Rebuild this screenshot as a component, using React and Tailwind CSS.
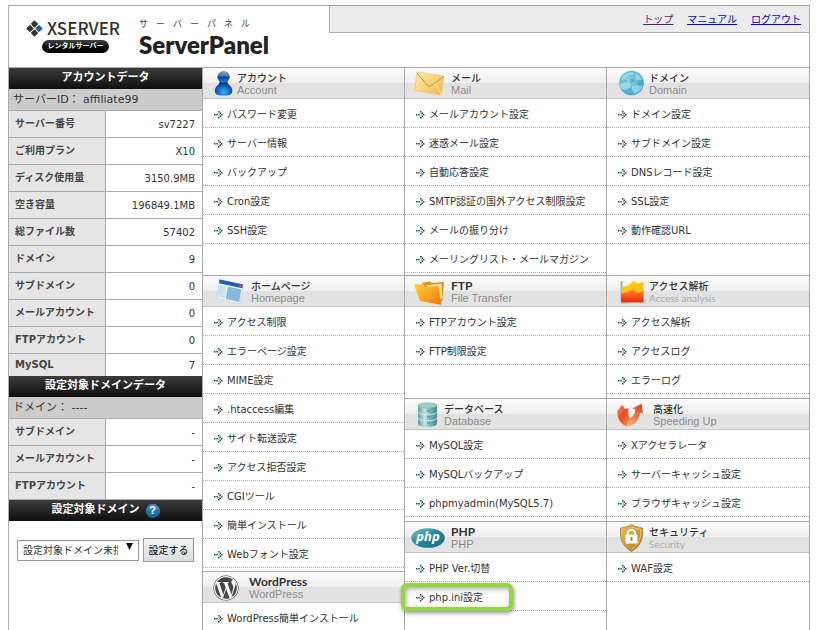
import clsx from "clsx";
import { FaWordpress } from "react-icons/fa";

const ACCOUNT_ROWS = [
  ["サーバー番号", "sv7227"],
  ["ご利用プラン", "X10"],
  ["ディスク使用量", "3150.9MB"],
  ["空き容量", "196849.1MB"],
  ["総ファイル数", "57402"],
  ["ドメイン", "9"],
  ["サブドメイン", "0"],
  ["メールアカウント", "0"],
  ["FTPアカウント", "0"],
  ["MySQL", "7"],
];

const DOMAIN_ROWS = [
  ["サブドメイン", "-"],
  ["メールアカウント", "-"],
  ["FTPアカウント", "-"],
];

function AccountIcon() {
  return (
    <svg width="34" height="30" viewBox="0 0 34 30" aria-hidden="true">
      <defs>
        <radialGradient id="acBody" cx="50%" cy="75%" r="65%">
          <stop offset="0" stopColor="#35b4f0" />
          <stop offset="0.6" stopColor="#1261c0" />
          <stop offset="1" stopColor="#0a2f86" />
        </radialGradient>
        <linearGradient id="acHead" x1="0" y1="0" x2="0" y2="1">
          <stop offset="0" stopColor="#7d9ccb" />
          <stop offset="0.45" stopColor="#4674b8" />
          <stop offset="0.5" stopColor="#0c3d96" />
          <stop offset="1" stopColor="#1f86d8" />
        </linearGradient>
      </defs>
      <path d="M16.500 13h8c-.2 2 .4 2.800 2 4.300 2 1.800 3 3.500 2.800 6.700-.1 2.500-3.800 3.600-8.800 3.600s-8.500-1.100-8.600-3.600c-.1-3.200.8-4.900 2.700-6.700 1.700-1.500 2.200-2.300 1.900-4.300z" fill="url(#acBody)" />
      <ellipse cx="20.500" cy="8.800" rx="6.200" ry="5.800" fill="url(#acHead)" />
    </svg>
  );
}

function MailIcon() {
  return (
    <svg width="46" height="30" viewBox="0 0 46 30" aria-hidden="true">
      <defs>
        <linearGradient id="mailBg" x1="0" y1="0" x2="1" y2="1">
          <stop offset="0" stopColor="#fde9b0" />
          <stop offset="0.5" stopColor="#f9d27e" />
          <stop offset="1" stopColor="#efb44e" />
        </linearGradient>
      </defs>
      <path d="M12 4l27 4-2.500 19L9.500 22.500z" fill="url(#mailBg)" stroke="#f0c470" strokeWidth="0.700" />
      <path d="M12 5l10.500 12.500c1 1 2.500 1.200 3.800.2L38.800 8.500" fill="none" stroke="#b98a45" strokeWidth="0.900" />
      <path d="M10 22l9.500-7M36.300 26.300L30 15" fill="none" stroke="#fbe3ad" strokeWidth="0.800" />
    </svg>
  );
}

function DomainIcon() {
  return (
    <svg width="42" height="30" viewBox="0 0 42 30" aria-hidden="true">
      <defs>
        <radialGradient id="globe" cx="40%" cy="40%" r="65%">
          <stop offset="0" stopColor="#8fd3e6" />
          <stop offset="0.7" stopColor="#56b4d3" />
          <stop offset="1" stopColor="#3d9fc2" />
        </radialGradient>
      </defs>
      <circle cx="24.500" cy="15" r="12.300" fill="url(#globe)" />
      <path d="M15 9c3-4 8-5.500 12-4.500l-1 2-5 1-2 3-4 2zM29 5l4 3 2 4-5 0-2-3zM13 16l6-2 5 2-1 4-5 2-4-1zM25 18l7-1 4 1-3 5-5 3-3-4z" fill="#bfe7f1" opacity="0.550" />
      <path d="M22 12l4-2 2 3-4 2zM30 16l4-1-1 4zM17 12l3 0-1 3zM21 20l4 0-1 4z" fill="#3392b4" opacity="0.450" />
    </svg>
  );
}

function HomepageIcon() {
  return (
    <svg width="48" height="30" viewBox="0 0 48 30" aria-hidden="true">
      <path d="M16.500 3.500l23.500 5-3 19-23.500-5.500z" fill="#f3f7fb" stroke="#c3cfdb" strokeWidth="0.600" />
      <path d="M16.500 3.500l23.500 5-.6 3.700-23.400-5z" fill="#1f5fae" />
      <circle cx="37.300" cy="10" r="1.300" fill="#e5483a" />
      <path d="M16 8.500l7.500 1.700-2 12.300-7.300-1.700z" fill="#c9e2f5" />
      <path d="M24.800 10.500l13.500 3-2 12.500-13.500-3z" fill="#86b8e0" />
    </svg>
  );
}

function FtpIcon() {
  return (
    <svg width="46" height="30" viewBox="0 0 46 30" aria-hidden="true">
      <defs>
        <linearGradient id="folder" x1="0" y1="0" x2="1" y2="1">
          <stop offset="0" stopColor="#fdd23c" />
          <stop offset="0.500" stopColor="#f9a81e" />
          <stop offset="1" stopColor="#ec6f10" />
        </linearGradient>
      </defs>
      <path d="M17 7l8-1.500 2 1.500 12-1-1.500 18-3 4z" fill="#e98b17" />
      <path d="M21 9.500l15.500-2 .8 14-2.800 3z" fill="#fde2a0" />
      <path d="M9 8.500l8-.5 3.500 3 11.500-.8c1 0 1.800.3 2 1.300L36 28.800 15 25z" fill="url(#folder)" />
    </svg>
  );
}

function AnalysisIcon() {
  return (
    <svg width="42" height="30" viewBox="0 0 42 30" aria-hidden="true">
      <defs>
        <linearGradient id="anRed" x1="0" y1="0" x2="0" y2="1">
          <stop offset="0" stopColor="#ff8a2b" />
          <stop offset="1" stopColor="#e8260c" />
        </linearGradient>
      </defs>
      <path d="M14.500 5v19" stroke="#b0b0b0" strokeWidth="2" />
      <path d="M15.500 11l6-1.500 5-4.500 4 2.500 6-1.500v14h-21z" fill="#fbc21b" />
      <path d="M15.500 11l6-1.500 5-4.500 4 2.500 6-1.500" fill="none" stroke="#ffe45c" strokeWidth="1.200" />
      <path d="M14 17.500l7-1.500 5-2.500 5 3.500 5.500-2.500V26l-22.500.5z" fill="url(#anRed)" />
      <path d="M14 27l23-.5 1.500-2" fill="none" stroke="#9b8d88" strokeWidth="0.800" />
    </svg>
  );
}

function DatabaseIcon() {
  return (
    <svg width="39" height="30" viewBox="0 0 39 30" aria-hidden="true">
      <defs>
        <linearGradient id="dbSide" x1="0" y1="0" x2="1" y2="0">
          <stop offset="0" stopColor="#5ba0a3" />
          <stop offset="0.350" stopColor="#c3e4e4" />
          <stop offset="0.650" stopColor="#75b5b8" />
          <stop offset="1" stopColor="#41858a" />
        </linearGradient>
      </defs>
      <path d="M13 6.500v18c0 2 4 3.300 9.500 3.300s9.500-1.300 9.500-3.300v-18z" fill="url(#dbSide)" />
      <path d="M13 12.500c0 2 4 3.300 9.500 3.300s9.500-1.300 9.500-3.300M13 18.500c0 2 4 3.300 9.500 3.300s9.500-1.300 9.500-3.300" fill="none" stroke="#dcecec" strokeWidth="0.900" />
      <path d="M22 12h3M22 18h3M22 24h3" stroke="#3d7f85" strokeWidth="1" />
      <ellipse cx="22.500" cy="6.500" rx="9.500" ry="2.600" fill="#9ccccd" stroke="#75b3b5" strokeWidth="0.700" />
    </svg>
  );
}

function SpeedIcon() {
  return (
    <svg width="46" height="30" viewBox="0 0 46 30" aria-hidden="true">
      <defs>
        <linearGradient id="spL" x1="0" y1="0" x2="0.800" y2="1">
          <stop offset="0" stopColor="#f5976d" />
          <stop offset="0.500" stopColor="#e2501f" />
          <stop offset="1" stopColor="#f08a4c" />
        </linearGradient>
        <linearGradient id="spR" x1="0.600" y1="0" x2="0.200" y2="1">
          <stop offset="0" stopColor="#e04a23" />
          <stop offset="0.600" stopColor="#f0834c" />
          <stop offset="1" stopColor="#f8b77a" />
        </linearGradient>
      </defs>
      <path d="M15 5.500l-4.700 6.500c-.5 6 2.700 12.500 9.200 15.700l4-7.200c-2-3-2.800-6.500-2-11.500L18 10z" fill="url(#spL)" />
      <path d="M19 27.700c1-3 2.500-5.500 3.500-8.200 3.500-1 5.500-4.500 5.700-9.500l-3-.5 9.500-4.700 1.300 10.200-3-1.500C32.500 20 28 27.500 19 27.700z" fill="url(#spR)" />
    </svg>
  );
}

function PhpIcon() {
  return (
    <svg width="46" height="30" viewBox="0 0 46 30" aria-hidden="true">
      <defs>
        <linearGradient id="phpBg" x1="0" y1="0" x2="1" y2="1">
          <stop offset="0" stopColor="#79bcc5" />
          <stop offset="0.500" stopColor="#27889a" />
          <stop offset="1" stopColor="#126a7d" />
        </linearGradient>
      </defs>
      <ellipse cx="23" cy="16" rx="16.800" ry="9.800" fill="url(#phpBg)" />
      <text x="23" y="19" textAnchor="middle" className="fill-white font-['Open_Sans',sans-serif] text-[13px] font-bold italic">
        php
      </text>
    </svg>
  );
}

function WordPressIcon() {
  return (
    <svg width="46" height="30" viewBox="0 0 46 30" aria-hidden="true">
      <circle cx="23" cy="16" r="12.500" fill="#f4f4f4" />
      <FaWordpress x="10" y="3" size={26} color="#464646" />
    </svg>
  );
}

function SecurityIcon() {
  return (
    <svg width="42" height="30" viewBox="0 0 42 30" aria-hidden="true">
      <defs>
        <linearGradient id="shield" x1="0" y1="0" x2="1" y2="1">
          <stop offset="0" stopColor="#e5c26c" />
          <stop offset="0.500" stopColor="#cf9f3b" />
          <stop offset="1" stopColor="#9c6f1d" />
        </linearGradient>
      </defs>
      <path d="M24.500 2.500c3 2 7 3 11 3.500 1 10-1.500 18-11 23.500-9.500-5.500-12-13.500-11-23.500 4-.5 8-1.500 11-3.500z" fill="url(#shield)" stroke="#a47a2a" strokeWidth="0.800" />
      <path d="M24.500 4.500c3 1.800 6 2.600 9.300 3 .5 8.500-1.800 15-9.300 19.800" fill="none" stroke="#ecd491" strokeWidth="0.900" />
      <path d="M20.800 14v-2.500a3.700 3.700 0 0 1 7.400 0V14" fill="none" stroke="#fff" strokeWidth="1.800" />
      <rect x="18.500" y="12.500" width="12" height="9" rx="1" fill="#fff" />
      <path d="M24.500 15v4" stroke="#b98a2c" strokeWidth="2" />
    </svg>
  );
}

const ACCOUNT = {
  title: "アカウント",
  sub: "Account",
  icon: AccountIcon,
  links: ["パスワード変更", "サーバー情報", "バックアップ", "Cron設定", "SSH設定"],
};
const HOMEPAGE = {
  title: "ホームページ",
  sub: "Homepage",
  icon: HomepageIcon,
  links: [
    "アクセス制限",
    "エラーページ設定",
    "MIME設定",
    ".htaccess編集",
    "サイト転送設定",
    "アクセス拒否設定",
    "CGIツール",
    "簡単インストール",
    "Webフォント設定",
  ],
};
const WORDPRESS = {
  title: "WordPress",
  latin: true,
  sub: "WordPress",
  icon: WordPressIcon,
  links: ["WordPress簡単インストール"],
};
const MAIL = {
  title: "メール",
  sub: "Mail",
  icon: MailIcon,
  links: [
    "メールアカウント設定",
    "迷惑メール設定",
    "自動応答設定",
    "SMTP認証の国外アクセス制限設定",
    "メールの振り分け",
    "メーリングリスト・メールマガジン",
  ],
};
const FTP = {
  title: "FTP",
  latin: true,
  sub: "File Transfer",
  icon: FtpIcon,
  links: ["FTPアカウント設定", "FTP制限設定"],
};
const DATABASE = {
  title: "データベース",
  sub: "Database",
  icon: DatabaseIcon,
  links: ["MySQL設定", "MySQLバックアップ", "phpmyadmin(MySQL5.7)"],
};
const PHP = {
  title: "PHP",
  latin: true,
  sub: "PHP",
  icon: PhpIcon,
  links: ["PHP Ver.切替", "php.ini設定"],
  highlight: "php.ini設定",
};
const DOMAIN = {
  title: "ドメイン",
  sub: "Domain",
  icon: DomainIcon,
  links: ["ドメイン設定", "サブドメイン設定", "DNSレコード設定", "SSL設定", "動作確認URL"],
};
const ANALYSIS = {
  title: "アクセス解析",
  sub: "Access analysis",
  narrow: true,
  icon: AnalysisIcon,
  links: ["アクセス解析", "アクセスログ", "エラーログ"],
};
const SPEED = {
  title: "高速化",
  sub: "Speeding Up",
  icon: SpeedIcon,
  links: ["Xアクセラレータ", "サーバーキャッシュ設定", "ブラウザキャッシュ設定"],
};
const SECURITY = {
  title: "セキュリティ",
  sub: "Security",
  narrow: true,
  icon: SecurityIcon,
  links: ["WAF設定"],
};

function Bullet() {
  return (
    <svg width="9" height="9" viewBox="0 0 9 9" className="shrink-0" aria-hidden="true">
      <g fill="#1d4a55">
        <rect x="0" y="4" width="1.500" height="1.500" />
        <rect x="2.300" y="4" width="1.500" height="1.500" />
        <rect x="4" y="1" width="1.500" height="1.500" />
        <rect x="5.500" y="2.500" width="1.500" height="1.500" />
        <rect x="7" y="4" width="1.500" height="1.500" />
        <rect x="5.500" y="5.500" width="1.500" height="1.500" />
        <rect x="4" y="7" width="1.500" height="1.500" />
      </g>
      <path d="M4.500 3.500l1.200 1.200-1.200 1.200" fill="none" stroke="#6f9aa3" strokeWidth="0.800" />
    </svg>
  );
}

function MenuSection({ section, className }) {
  const Icon = section.icon;
  return (
    <section className={className}>
      <div className="flex h-[31px] border-b border-[#c4c4c4] bg-[linear-gradient(#fcfcfc,#eeeeee_50%,#e1e1e1_50%,#e3e3e3)]">
        <Icon />
        <div className="pt-1">
          <h2
            className={clsx(
              "leading-3 text-[#333]",
              section.latin
                ? "font-['Lato',sans-serif] text-[12px] font-bold"
                : "font-['Noto_Sans_CJK_JP',sans-serif] text-[10px] font-medium"
            )}
          >
            {section.title}
          </h2>
          <p
            className={clsx(
              "leading-3",
              section.narrow
                ? "font-['Lato',sans-serif] text-[10px] text-[#aaa]"
                : "font-['Liberation_Sans',sans-serif] text-[11px] text-[#8c8c8c]"
            )}
          >
            {section.sub}
          </p>
        </div>
      </div>
      <ul>
        {section.links.map((label) => (
          <li key={label} className="relative border-b border-dotted border-[#aaa]">
            {label === section.highlight && (
              <span className="absolute top-px -left-1 h-7 w-28 rounded-md border-4 border-[#94d63e] shadow-[1px_2px_4px_rgba(0,0,0,0.45),inset_1px_2px_5px_rgba(0,0,0,0.35)]" />
            )}
            <a href="#" className="flex h-7 items-center gap-1 pt-0.5 pl-[11px] text-[10px] whitespace-nowrap">
              <Bullet />
              {label}
            </a>
          </li>
        ))}
      </ul>
    </section>
  );
}

function SideTitle({ children }) {
  return (
    <h2 className="flex h-[21px] items-center justify-center gap-1.5 bg-linear-to-b from-[#3c3c3c] to-[#101010] text-[11px] font-bold text-white">
      {children}
    </h2>
  );
}

function SideTable({ rows, compactLast }) {
  return (
    <table className="w-full table-fixed border-separate border-spacing-0 text-[10px]">
      <tbody>
        {rows.map(([label, value], i) => {
          const compact = compactLast && i === rows.length - 1;
          return (
            <tr key={label}>
              <th
                scope="row"
                className={clsx(
                  "w-[97px] border-r border-[#aaa] bg-[#e5e5e5] pl-1.5 text-left leading-4 font-bold whitespace-nowrap text-[#444]",
                  compact ? "h-[22px]" : "h-[27px] border-b"
                )}
              >
                {label}
              </th>
              <td className={clsx("border-[#aaa] pt-0.5 pr-[7px] text-right leading-4", !compact && "border-b")}>
                {value}
              </td>
            </tr>
          );
        })}
      </tbody>
    </table>
  );
}

function Header() {
  return (
    <header className="flex h-[62px] items-start border-b border-[#aaa]">
      <div className="flex w-[320px] shrink-0 pt-[11px] pl-[17px]">
        <div className="w-[113px]">
          <div className="flex h-[22px] items-center gap-1">
            <svg width="17" height="17" viewBox="0 0 17 17" aria-hidden="true">
              <g strokeLinejoin="round" strokeWidth="1">
                <path d="M8.500.8l3.200 3.200-3.200 3.200L5.300 4z" fill="#333" stroke="#333" />
                <path d="M4 5.300l3.200 3.200L4 11.700.8 8.500z" fill="#333" stroke="#333" />
                <path d="M13 5.300l3.200 3.200-3.200 3.200-3.200-3.200z" fill="#1c5cae" stroke="#1c5cae" />
                <path d="M8.500 9.800l3.200 3.200-3.200 3.200L5.300 13z" fill="#333" stroke="#333" />
              </g>
            </svg>
            <span className="font-['Noto_Sans_CJK_JP',sans-serif] text-[17px] leading-5 font-medium text-[#333]">
              XSERVER
            </span>
          </div>
          <div className="mt-px ml-4 flex h-[13px] w-[67px] items-center justify-center rounded-full bg-linear-to-b from-[#444] to-black text-[7px] leading-none font-bold whitespace-nowrap text-white">
            レンタルサーバー
          </div>
        </div>
        <div>
          <p className="flex gap-2 pt-px pb-[3px] font-['Noto_Sans_CJK_JP',sans-serif] text-[9px] leading-3 text-[#444]">
            {[..."サーバーパネル"].map((ch, i) => (
              <span key={i}>{ch}</span>
            ))}
          </p>
          <h1 className="font-['Lato',sans-serif] text-[24px] leading-6 font-extrabold text-[#222]">
            ServerPanel
          </h1>
        </div>
      </div>
      <nav className="flex h-[27px] flex-1 items-center justify-end gap-3.5 border-b border-l border-[#aaa] bg-[#ececec] pr-2 text-[10px] underline">
        <a href="#" className="text-[#551a8b]">トップ</a>
        <a href="#" className="text-[#0000ee]">マニュアル</a>
        <a href="#" className="text-[#0000ee]">ログアウト</a>
      </nav>
    </header>
  );
}

function Sidebar() {
  return (
    <aside className="w-[194px] shrink-0 border-r border-[#aaa]">
      <SideTitle>アカウントデータ</SideTitle>
      <p className="h-[22px] border-b border-[#aaa] bg-[#cbcbcb] pl-1 text-[11px] leading-[22px]">
        サーバーID： affiliate99
      </p>
      <SideTable rows={ACCOUNT_ROWS} compactLast />
      <SideTitle>設定対象ドメインデータ</SideTitle>
      <p className="h-[22px] border-b border-[#aaa] bg-[#cbcbcb] pl-1 text-[11px] leading-[22px]">
        ドメイン： ----
      </p>
      <SideTable rows={DOMAIN_ROWS} />
      <SideTitle>
        設定対象ドメイン
        <span className="flex size-3.5 items-center justify-center rounded-full bg-linear-to-b from-[#4a9bd0] to-[#10598f] font-['Liberation_Sans',sans-serif] text-[11px]">
          ?
        </span>
      </SideTitle>
      <form className="flex items-start gap-1 pt-4 pl-2" onSubmit={(e) => e.preventDefault()}>
        <div className="relative">
          <select
            aria-label="設定対象ドメイン"
            className="h-[21px] w-[122px] appearance-none border border-[#999] bg-white pr-5 pl-[5px] text-[10px]"
          >
            <option>設定対象ドメイン未指定</option>
          </select>
          <svg width="7" height="7" viewBox="0 0 7 7" className="pointer-events-none absolute top-1.5 right-1.5" aria-hidden="true">
            <path d="M0 0h7L3.500 7z" fill="#111" />
          </svg>
        </div>
        <button
          type="submit"
          className="mt-px h-6 w-[51px] border border-[#999] bg-linear-to-b from-[#f3f3f3] to-[#dcdcdc] text-[10px] whitespace-nowrap text-black"
        >
          設定する
        </button>
      </form>
    </aside>
  );
}

export default function App() {
  return (
    <div
      lang="ja"
      className="flex min-h-screen flex-col bg-white pt-[5px] pr-[9px] pl-2 font-['DejaVu_Sans','Noto_Sans_CJK_JP',sans-serif] text-[#333]"
    >
      <div className="flex flex-1 flex-col border border-b-0 border-[#aaa]">
        <Header />
        <div className="flex flex-1">
          <Sidebar />
          <main className="grid flex-1 grid-cols-3">
            <div className="border-r border-[#aaa]">
              <MenuSection section={ACCOUNT} className="min-h-[207px]" />
              <MenuSection section={HOMEPAGE} className="min-h-[296px] border-t border-[#aaa]" />
              <MenuSection section={WORDPRESS} className="border-t border-[#aaa]" />
            </div>
            <div className="border-r border-[#aaa]">
              <MenuSection section={MAIL} className="min-h-[207px]" />
              <MenuSection section={FTP} className="min-h-[123px] border-t border-[#aaa]" />
              <MenuSection section={DATABASE} className="min-h-[123px] border-t border-[#aaa]" />
              <MenuSection section={PHP} className="border-t border-[#aaa]" />
            </div>
            <div>
              <MenuSection section={DOMAIN} className="min-h-[207px]" />
              <MenuSection section={ANALYSIS} className="min-h-[123px] border-t border-[#aaa]" />
              <MenuSection section={SPEED} className="min-h-[123px] border-t border-[#aaa]" />
              <MenuSection section={SECURITY} className="border-t border-[#aaa]" />
            </div>
          </main>
        </div>
      </div>
    </div>
  );
}
